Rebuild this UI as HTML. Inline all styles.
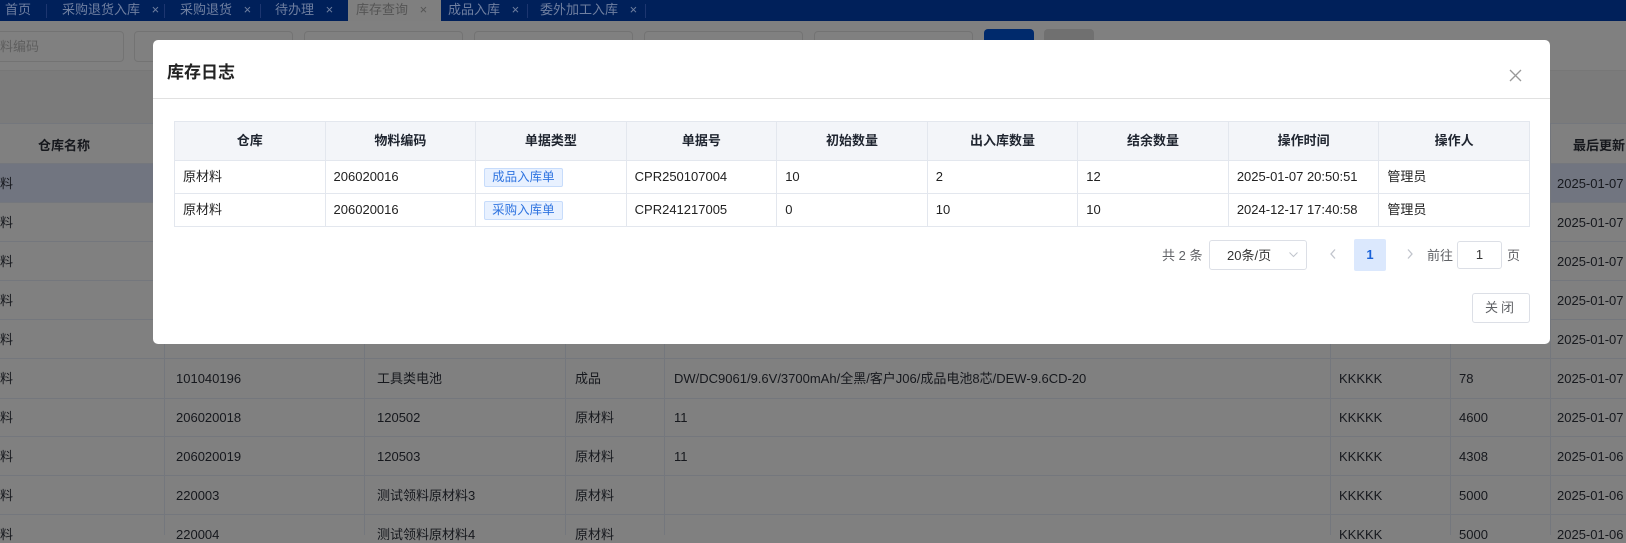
<!DOCTYPE html>
<html><head><meta charset="utf-8"><style>
*{margin:0;padding:0;box-sizing:border-box}
body{width:1626px;height:535px;overflow:hidden;background:#808080;font-family:"Liberation Sans","Noto Sans CJK SC",sans-serif;font-size:13px;line-height:16px;color:#16181d;position:relative}
.a{position:absolute;white-space:nowrap}
.tabbar{left:0;top:0;width:1626px;height:21px;background:#00205a}
.tab{top:0;height:21px;line-height:19px;font-size:13px;color:#6f7fa0}
.sep{top:4px;width:1px;height:14px;background:#1d3670}
.inp{top:31px;height:31px;border:1px solid #737373;border-radius:4px}
.bgl{left:0;width:1626px;height:1px;background:#74777d}
.bgv{top:123px;width:1px;height:412px;background:#74777d}
.modal{left:153px;top:40px;width:1397px;height:304px;background:#fff;border-radius:5px}
.th{background:#f3f5f9;font-weight:bold;color:#1f2530;text-align:center}
table{border-collapse:collapse;position:absolute;left:21px;top:81px;width:1356px;table-layout:fixed}
td{border:1px solid #e3e7ee;font-size:13px;color:#222;padding:0 8px;height:33px}
tr.h td{height:39px}
.tag{display:inline-block;background:#e8f1ff;border:1px solid #c7dcfb;color:#2f74e0;border-radius:2px;padding:0 7px;line-height:17px;font-size:12.5px}
</style></head><body>
<div class="a tabbar"></div>
<div class="a tab" style="left:5px">首页</div>
<div class="a sep" style="left:46px"></div>
<div class="a tab" style="left:62px">采购退货入库 <span style="margin-left:8px">×</span></div>
<div class="a sep" style="left:164px"></div>
<div class="a tab" style="left:180px">采购退货 <span style="margin-left:8px">×</span></div>
<div class="a sep" style="left:260px"></div>
<div class="a tab" style="left:275px">待办理 <span style="margin-left:8px">×</span></div>
<div class="a" style="left:348px;top:0;width:93px;height:21px;background:#7f7f7f"></div>
<div class="a tab" style="left:356px;color:#555">库存查询 <span style="margin-left:8px">×</span></div>
<div class="a tab" style="left:448px">成品入库 <span style="margin-left:8px">×</span></div>
<div class="a sep" style="left:527px"></div>
<div class="a tab" style="left:540px">委外加工入库 <span style="margin-left:8px">×</span></div>
<div class="a sep" style="left:645px"></div>

<div class="a inp" style="left:-5px;width:129px"></div>
<div class="a" style="left:0;top:39px;color:#5e5e5e;font-size:13px">料编码</div>
<div class="a inp" style="left:134px;width:159px"></div>
<div class="a inp" style="left:304px;width:159px"></div>
<div class="a inp" style="left:474px;width:159px"></div>
<div class="a inp" style="left:644px;width:159px"></div>
<div class="a inp" style="left:814px;width:159px"></div>
<div class="a" style="left:984px;top:29px;width:50px;height:34px;background:#002a6c;border-radius:4px"></div>
<div class="a" style="left:1044px;top:29px;width:50px;height:34px;background:#707070;border-radius:4px"></div>

<div class="a" style="left:0;top:70px;width:1626px;height:53px;background:#7b7b7b"></div>
<div class="a bgl" style="top:70px;background:#777"></div>
<div class="a bgl" style="top:123px"></div>
<div class="a" style="left:0;top:163px;width:1626px;height:39px;background:#717580"></div>
<div class="a bgl" style="top:163px"></div>
<div class="a bgl" style="top:202px"></div>
<div class="a bgl" style="top:241px"></div>
<div class="a bgl" style="top:280px"></div>
<div class="a bgl" style="top:319px"></div>
<div class="a bgl" style="top:358px"></div>
<div class="a bgl" style="top:398px"></div>
<div class="a bgl" style="top:436px"></div>
<div class="a bgl" style="top:475px"></div>
<div class="a bgl" style="top:514px"></div>
<div class="a bgv" style="left:164px"></div>
<div class="a bgv" style="left:364px"></div>
<div class="a bgv" style="left:565px"></div>
<div class="a bgv" style="left:664px"></div>
<div class="a bgv" style="left:1330px"></div>
<div class="a bgv" style="left:1450px"></div>
<div class="a bgv" style="left:1550px"></div>
<div class="a" style="left:38px;top:138px;font-weight:bold;font-size:13px">仓库名称</div>
<div class="a" style="left:1573px;top:138px;font-weight:bold;font-size:13px">最后更新</div>

<div class="a" style="left:-26px;top:176px">原材料</div>
<div class="a" style="left:-26px;top:215px">原材料</div>
<div class="a" style="left:-26px;top:254px">原材料</div>
<div class="a" style="left:-26px;top:293px">原材料</div>
<div class="a" style="left:-26px;top:332px">原材料</div>
<div class="a" style="left:-26px;top:371px">原材料</div>
<div class="a" style="left:-26px;top:410px">原材料</div>
<div class="a" style="left:-26px;top:449px">原材料</div>
<div class="a" style="left:-26px;top:488px">原材料</div>
<div class="a" style="left:-26px;top:527px">原材料</div>
<div class="a" style="left:1557px;top:176px">2025-01-07</div>
<div class="a" style="left:1557px;top:215px">2025-01-07</div>
<div class="a" style="left:1557px;top:254px">2025-01-07</div>
<div class="a" style="left:1557px;top:293px">2025-01-07</div>
<div class="a" style="left:1557px;top:332px">2025-01-07</div>
<div class="a" style="left:176px;top:371px">101040196</div><div class="a" style="left:377px;top:371px">工具类电池</div><div class="a" style="left:575px;top:371px">成品</div><div class="a" style="left:674px;top:371px">DW/DC9061/9.6V/3700mAh/全黑/客户J06/成品电池8芯/DEW-9.6CD-20</div><div class="a" style="left:1339px;top:371px">KKKKK</div><div class="a" style="left:1459px;top:371px">78</div><div class="a" style="left:1557px;top:371px">2025-01-07</div>
<div class="a" style="left:176px;top:410px">206020018</div><div class="a" style="left:377px;top:410px">120502</div><div class="a" style="left:575px;top:410px">原材料</div><div class="a" style="left:674px;top:410px">11</div><div class="a" style="left:1339px;top:410px">KKKKK</div><div class="a" style="left:1459px;top:410px">4600</div><div class="a" style="left:1557px;top:410px">2025-01-07</div>
<div class="a" style="left:176px;top:449px">206020019</div><div class="a" style="left:377px;top:449px">120503</div><div class="a" style="left:575px;top:449px">原材料</div><div class="a" style="left:674px;top:449px">11</div><div class="a" style="left:1339px;top:449px">KKKKK</div><div class="a" style="left:1459px;top:449px">4308</div><div class="a" style="left:1557px;top:449px">2025-01-06</div>
<div class="a" style="left:176px;top:488px">220003</div><div class="a" style="left:377px;top:488px">测试领料原材料3</div><div class="a" style="left:575px;top:488px">原材料</div><div class="a" style="left:1339px;top:488px">KKKKK</div><div class="a" style="left:1459px;top:488px">5000</div><div class="a" style="left:1557px;top:488px">2025-01-06</div>
<div class="a" style="left:176px;top:527px">220004</div><div class="a" style="left:377px;top:527px">测试领料原材料4</div><div class="a" style="left:575px;top:527px">原材料</div><div class="a" style="left:1339px;top:527px">KKKKK</div><div class="a" style="left:1459px;top:527px">5000</div><div class="a" style="left:1557px;top:527px">2025-01-06</div>

<div class="a modal">
  <div class="a" style="left:14px;top:23px;font-size:17px;line-height:20px;font-weight:bold;color:#222">库存日志</div>
  <svg class="a" style="left:1356px;top:29px" width="13" height="13" viewBox="0 0 13 13"><path d="M1 1L12 12M12 1L1 12" stroke="#999" stroke-width="1.3"/></svg>
  <div class="a" style="left:0;top:58px;width:1397px;height:1px;background:#e1e1e1"></div>
  <table>
    <tr class="h th"><td class="th">仓库</td><td class="th">物料编码</td><td class="th">单据类型</td><td class="th">单据号</td><td class="th">初始数量</td><td class="th">出入库数量</td><td class="th">结余数量</td><td class="th">操作时间</td><td class="th">操作人</td></tr>
    <tr><td>原材料</td><td>206020016</td><td><span class="tag">成品入库单</span></td><td>CPR250107004</td><td>10</td><td>2</td><td>12</td><td>2025-01-07 20:50:51</td><td>管理员</td></tr>
    <tr><td>原材料</td><td>206020016</td><td><span class="tag">采购入库单</span></td><td>CPR241217005</td><td>0</td><td>10</td><td>10</td><td>2024-12-17 17:40:58</td><td>管理员</td></tr>
  </table>
  <div class="a" style="left:1009px;top:208px;color:#606266">共 2 条</div>
  <div class="a" style="left:1056px;top:200px;width:98px;height:30px;border:1px solid #dcdfe6;border-radius:3px"></div>
  <div class="a" style="left:1074px;top:208px;color:#333">20条/页</div>
  <svg class="a" style="left:1136px;top:212px" width="9" height="6"><path d="M0.5 0.5L4.5 4.5L8.5 0.5" stroke="#c0c4cc" fill="none"/></svg>
  <svg class="a" style="left:1177px;top:209px" width="6" height="10"><path d="M5 0.5L1 5L5 9.5" stroke="#c0c4cc" fill="none" stroke-width="1.3"/></svg>
  <div class="a" style="left:1201px;top:199px;width:32px;height:32px;background:#dbe8fd;border-radius:2px;color:#1a62d8;font-weight:bold;text-align:center;line-height:32px">1</div>
  <svg class="a" style="left:1254px;top:209px" width="6" height="10"><path d="M1 0.5L5 5L1 9.5" stroke="#c0c4cc" fill="none" stroke-width="1.3"/></svg>
  <div class="a" style="left:1274px;top:208px;color:#606266">前往</div>
  <div class="a" style="left:1304px;top:201px;width:45px;height:28px;border:1px solid #dcdfe6;border-radius:3px;text-align:center;line-height:26px;color:#333">1</div>
  <div class="a" style="left:1354px;top:208px;color:#606266">页</div>
  <div class="a" style="left:1319px;top:253px;width:58px;height:30px;border:1px solid #dcdfe6;border-radius:3px;text-align:center;line-height:28px;color:#606266;letter-spacing:3px">关闭</div>
</div>
</body></html>
